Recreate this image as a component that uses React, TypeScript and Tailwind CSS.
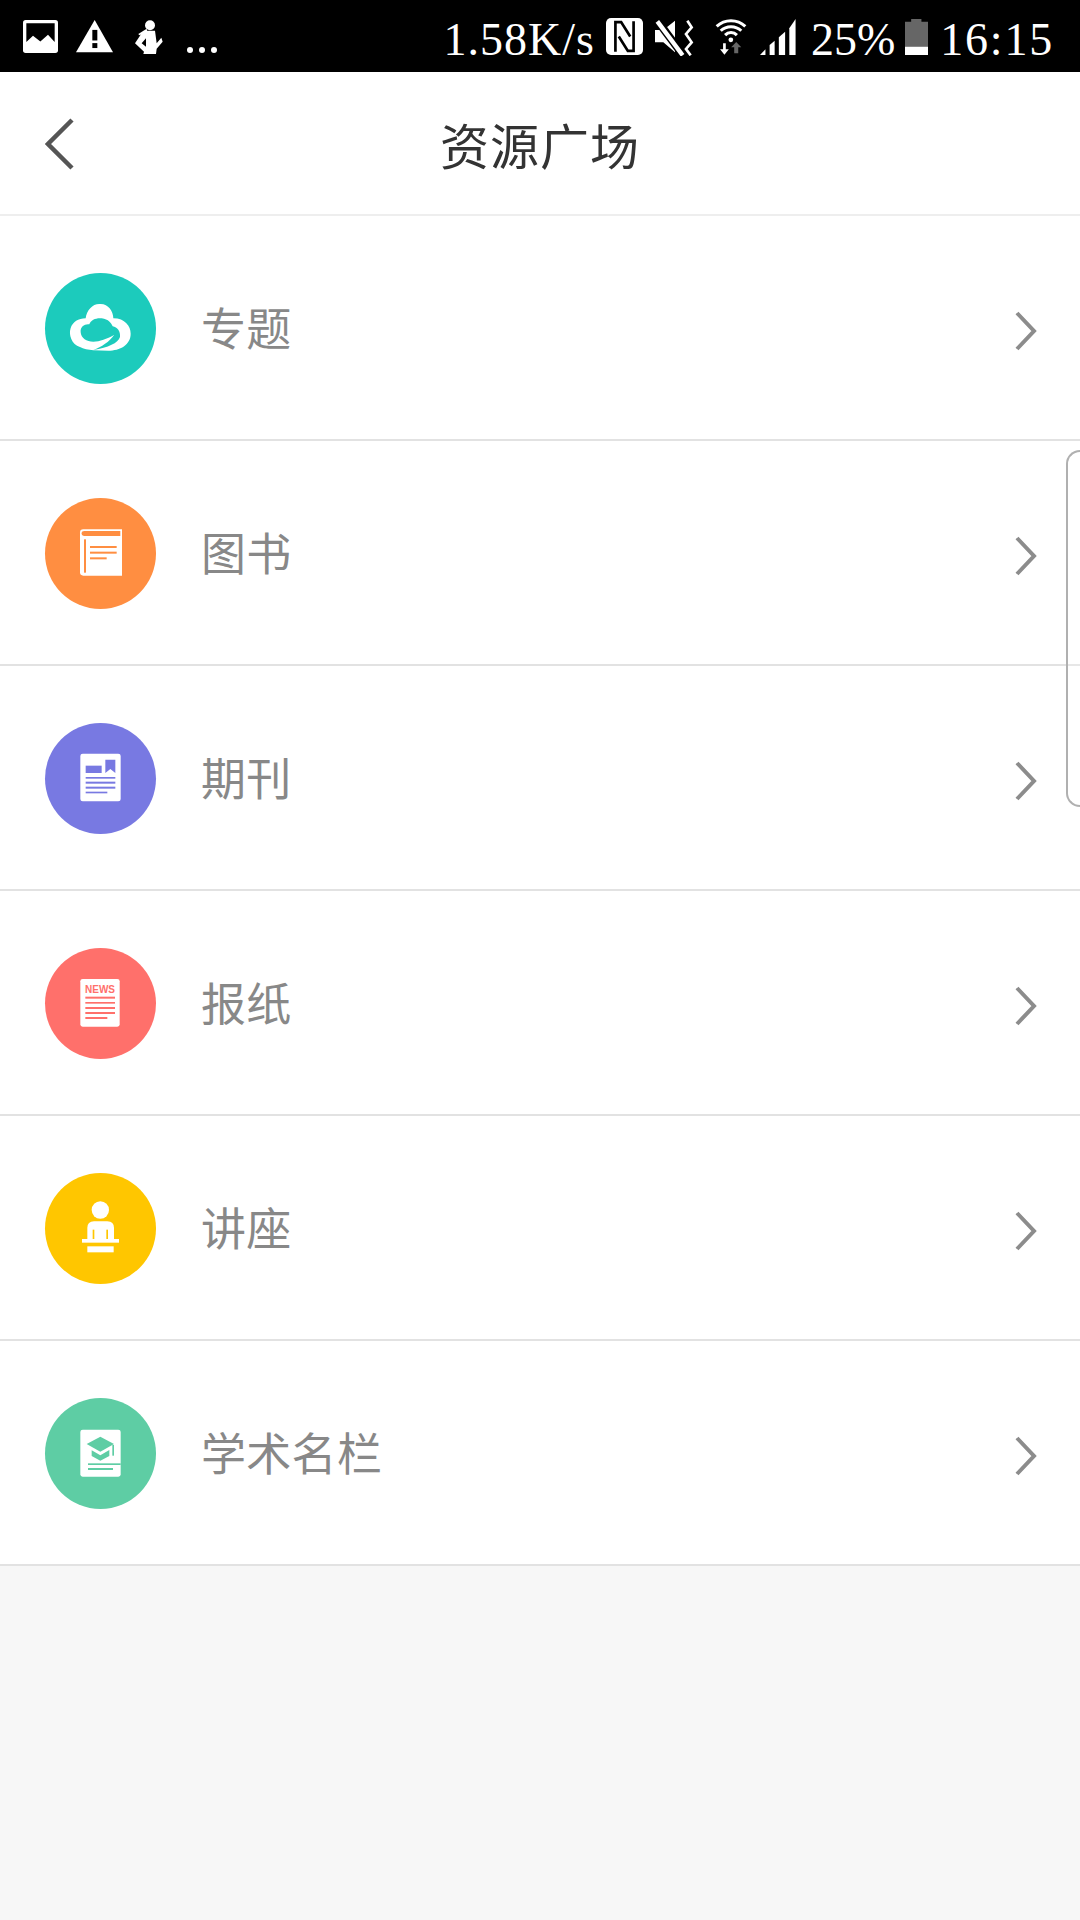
import React from "react";

const cjk = { fontFamily: '"Noto Sans CJK SC", sans-serif' };
const serif = { fontFamily: '"Liberation Serif", serif' };

function Zsvg({ w, h, vb, children }: { w: number; h: number; vb: string; children: React.ReactNode }) {
  return (
    <svg width={w} height={h} viewBox={vb} preserveAspectRatio="none" className="block shrink-0">
      {children}
    </svg>
  );
}

function CloudIcon({ c }: { c: string }) {
  return (
    <svg viewBox="45 40 333 333" className="block w-full h-full">
      <path d="M150 262C125 255 115 225 122 205C128 187 145 176 167 176C170 150 190 130 212 133C235 133 250 155 250 176C285 176 302 200 302 222C302 255 270 273 235 273L190 272C175 270 160 268 150 262Z" fill="#fff" />
      <path d="M152 218C150 200 165 192 178 194C182 180 200 174 215 176C235 178 245 192 248 200C262 202 272 215 270 232C264 250 235 264 190 271C215 262 238 246 252 226C230 238 210 246 190 246C170 246 153 236 152 218Z" fill={c} />
    </svg>
  );
}

function BookIcon({ c }: { c: string }) {
  return (
    <svg viewBox="45 714 333 333" className="block w-full h-full">
      <path d="M160 808H276V947H160Q150 947 150 937V818Q150 808 160 808Z" fill="#fff" />
      <path d="M163 813H271V828H163Q155 828 155 820Q155 813 163 813Z" fill={c} />
      <rect x="162" y="838" width="6" height="100" fill={c} />
      <rect x="180" y="858" width="80" height="6" fill={c} />
      <rect x="180" y="875" width="80" height="6" fill={c} />
      <rect x="180" y="892" width="50" height="6" fill={c} />
    </svg>
  );
}

function JournalIcon({ c }: { c: string }) {
  return (
    <svg viewBox="45 40 333 333" className="block w-full h-full">
      <rect x="151" y="132" width="121" height="143" rx="7" fill="#fff" />
      <rect x="167" y="168" width="48" height="22" fill={c} />
      <path d="M226 150H256V190L241 178L226 190Z" fill={c} />
      <rect x="167" y="202" width="89" height="5" fill={c} />
      <rect x="167" y="216" width="89" height="6" fill={c} />
      <rect x="167" y="231" width="89" height="6" fill={c} />
      <rect x="167" y="246" width="65" height="5" fill={c} />
    </svg>
  );
}

function NewsIcon({ c }: { c: string }) {
  return (
    <svg viewBox="45 714 333 333" className="block w-full h-full">
      <rect x="151" y="807" width="118" height="143" rx="7" fill="#fff" />
      <text x="165" y="850" fontSize="30" fontWeight="700" fill={c} textLength="90" lengthAdjust="spacingAndGlyphs" fontFamily="Liberation Sans, sans-serif">NEWS</text>
      <rect x="166" y="860" width="89" height="6" fill={c} />
      <rect x="166" y="876" width="89" height="5" fill={c} />
      <rect x="166" y="891" width="89" height="6" fill={c} />
      <rect x="166" y="906" width="89" height="6" fill={c} />
      <rect x="166" y="921" width="66" height="6" fill={c} />
    </svg>
  );
}

function LectureIcon({ c }: { c: string }) {
  return (
    <svg viewBox="45 40 333 333" className="block w-full h-full">
      <circle cx="211" cy="151" r="26" fill="#fff" />
      <path d="M172 238V205Q172 185 192 185H232Q252 185 252 205V238Z" fill="#fff" />
      <rect x="188" y="210" width="5" height="28" fill={c} />
      <rect x="229" y="210" width="5" height="28" fill={c} />
      <rect x="156" y="238" width="111" height="11" fill="#fff" />
      <rect x="172" y="260" width="79" height="18" fill="#fff" />
    </svg>
  );
}

function ScholarIcon({ c }: { c: string }) {
  return (
    <svg viewBox="45 714 333 333" className="block w-full h-full">
      <rect x="151" y="809" width="121" height="141" rx="7" fill="#fff" />
      <path d="M170 852L211 830L252 852L211 875Z" fill={c} />
      <path d="M185 871L211 886L238 870V888L211 902L185 888Z" fill={c} />
      <rect x="247" y="855" width="5" height="32" fill={c} />
      <rect x="174" y="910" width="98" height="5" fill={c} />
      <rect x="174" y="924" width="75" height="6" fill={c} />
    </svg>
  );
}

const rows = [
  { label: "专题", bg: "bg-[#1ccbbc]", color: "#1ccbbc", Icon: CloudIcon },
  { label: "图书", bg: "bg-[#ff8e41]", color: "#ff8e41", Icon: BookIcon },
  { label: "期刊", bg: "bg-[#7879e2]", color: "#7879e2", Icon: JournalIcon },
  { label: "报纸", bg: "bg-[#ff706b]", color: "#ff706b", Icon: NewsIcon },
  { label: "讲座", bg: "bg-[#ffc600]", color: "#ffc600", Icon: LectureIcon },
  { label: "学术名栏", bg: "bg-[#5ecda4]", color: "#5ecda4", Icon: ScholarIcon },
];

function StatusBar() {
  return (
    <div className="h-[72px] bg-black flex items-start justify-between text-white">
      <div className="flex items-start pl-[23px] pt-[20px]">
        <Zsvg w={35} h={33} vb="70 60 105 100">
          <rect x="70" y="60" width="105" height="100" rx="8" fill="#fff" />
          <path d="M80 70H165V127L145 105L122 125L100 108L80 127Z" fill="#000" />
        </Zsvg>
        <div className="ml-[18px]">
          <Zsvg w={37} h={33} vb="228 60 111 100">
            <path d="M284 60L339 158H228Z" fill="#fff" />
            <rect x="277" y="90" width="15" height="32" fill="#000" />
            <rect x="277" y="130" width="15" height="15" fill="#000" />
          </Zsvg>
        </div>
        <div className="ml-[22px]">
          <Zsvg w={28} h={35} vb="405 60 84 105">
            <circle cx="450" cy="76" r="15" fill="#fff" />
            <path d="M440 86L415 102L418 106L442 96Z" fill="#fff" />
            <path d="M435 92H465L470 130L484 113L488 125L470 146L468 162H430L432 155L405 130L425 100ZM438 115L425 130L438 140Z" fill="#fff" fillRule="evenodd" />
          </Zsvg>
        </div>
        <div className="ml-[24px] mt-[27px] flex gap-[6px]">
          <span className="w-[6px] h-[6px] rounded-full bg-white" />
          <span className="w-[6px] h-[6px] rounded-full bg-white" />
          <span className="w-[6px] h-[6px] rounded-full bg-white" />
        </div>
      </div>
      <div className="flex items-start pr-[26px] pt-[18px]">
        <span className="text-[46px] leading-[44px] tracking-[1px] whitespace-nowrap" style={serif}>1.58K/s</span>
        <div className="ml-[11px]">
          <Zsvg w={37} h={37} vb="0 0 110 110">
            <rect x="0" y="0" width="110" height="110" rx="15" fill="#fff" />
            <path d="M28 100V12H45L72 55" stroke="#000" strokeWidth="8" fill="none" />
            <path d="M82 10V98H65L38 55" stroke="#000" strokeWidth="8" fill="none" />
          </Zsvg>
        </div>
        <div className="ml-[12px] mt-[2px]">
          <Zsvg w={39} h={36} vb="165 28 117 108">
            <path d="M165 58H190L225 30V125L190 95H165Z" fill="#fff" />
            <path d="M172 30L248 132" stroke="#000" strokeWidth="24" />
            <path d="M172 32L248 134" stroke="#fff" strokeWidth="13" />
            <path d="M262 30L275 50L258 70L275 95L258 115L272 134" stroke="#fff" strokeWidth="8" fill="none" />
          </Zsvg>
        </div>
        <div className="ml-[21px]">
          <Zsvg w={32} h={37} vb="345 25 95 110">
            <path d="M350 50A62 62 0 0 1 435 50M362 63A44 44 0 0 1 423 63M375 76A24 24 0 0 1 410 76" stroke="#fff" strokeWidth="9" fill="none" />
            <circle cx="392" cy="90" r="7" fill="#fff" />
            <path d="M369 100V118H360L373 134L386 118H377V100Z" fill="#fff" />
            <path d="M402 130V112H393L408 96L423 112H414V130Z" fill="#666" />
          </Zsvg>
        </div>
        <div className="ml-[13px] mt-[1px]">
          <Zsvg w={36} h={36} vb="805 57 86 108">
            <path d="M805 165L818 148V165Z" fill="#fff" />
            <path d="M828 135L840 122V165H828Z" fill="#fff" />
            <path d="M850 112L865 95V165H850Z" fill="#fff" />
            <path d="M875 85L890 57V165H875Z" fill="#fff" />
          </Zsvg>
        </div>
        <span className="ml-[15px] text-[46px] leading-[44px] whitespace-nowrap" style={serif}>25%</span>
        <div className="ml-[10px] mt-[1px]">
          <Zsvg w={23} h={36} vb="1150 57 56 108">
            <path d="M1150 65H1165V57H1190V65H1206V140H1150Z" fill="#666" />
            <rect x="1150" y="140" width="56" height="25" fill="#fff" />
          </Zsvg>
        </div>
        <span className="ml-[12px] text-[46px] leading-[44px] tracking-[1.8px] whitespace-nowrap" style={serif}>16:15</span>
      </div>
    </div>
  );
}

function Header() {
  return (
    <div className="h-[144px] bg-white border-b-2 border-[#eeeeee] flex items-center relative">
      <div className="pl-[45px] pt-[2px]">
        <svg width="30" height="52" viewBox="0 0 30 52" className="block">
          <path d="M27 2L3 26L27 50" stroke="#555" strokeWidth="4.5" fill="none" />
        </svg>
      </div>
      <h1 className="absolute left-0 right-0 text-center text-[49px] leading-[60px] font-normal tracking-[1px] text-[#333] top-[42px]" style={cjk}>资源广场</h1>
    </div>
  );
}

function Row({ label, bg, color, Icon }: (typeof rows)[number]) {
  return (
    <div className="h-[225px] bg-white border-b-2 border-[#e2e2e2] flex items-start pl-[45px] pr-[43px] pt-[57px]">
      <div className={`w-[111px] h-[111px] rounded-full shrink-0 ${bg}`}>
        <Icon c={color} />
      </div>
      <span className="ml-[45px] mt-[21px] text-[45px] leading-[66px] tracking-[0.3px] text-[#888888] flex-1" style={cjk}>{label}</span>
      <svg width="22" height="40" viewBox="0 0 22 40" className="block mt-[38px] shrink-0">
        <path d="M2 2L19 20L2 38" stroke="#8c8c8c" strokeWidth="4" fill="none" />
      </svg>
    </div>
  );
}

export default function App() {
  return (
    <div className="w-[1080px] h-[1920px] bg-[#f7f7f7] relative overflow-hidden">
      <StatusBar />
      <Header />
      {rows.map((r) => (
        <Row key={r.label} {...r} />
      ))}
      <div className="absolute right-0 top-[450px] w-[14px] h-[357px] border-2 border-r-0 border-[#b0b0b0] rounded-l-[16px] bg-white/20" />
    </div>
  );
}
